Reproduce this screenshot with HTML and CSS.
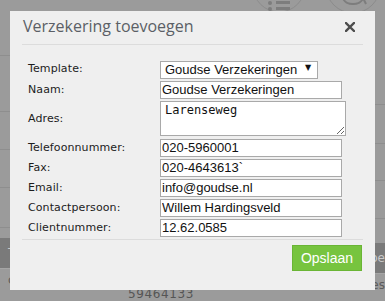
FILE: index.html
```html
<!DOCTYPE html>
<html lang="nl">
<head>
    <meta charset="UTF-8">
    <meta name="viewport" content="width=device-width, initial-scale=1.0">
    <title>Verzekering toevoegen</title>
    <link rel="stylesheet" href="styles.css">
</head>
<body>

    <div class="page">
        <div class="col col-left">
            <div class="row r57"></div>
            <div class="row r57"></div>
            <div class="row r39"></div>
            <div class="row r38"></div>
            <div class="row r41"></div>
            <div class="row r11"></div>
            <div class="band"><span>T</span></div>
            <div class="row-last">
                <span class="frag">c</span>
                <span class="num">59464133</span>
            </div>
        </div>
        <div class="col col-right">
            <div class="icons">
                <svg width="145" height="14" viewBox="0 0 145 14">
                    <circle cx="39" cy="-14" r="26" fill="none" stroke="#8c8c8c" stroke-width="1"/>
                    <circle cx="30" cy="3" r="2" fill="#7d7d7d"/>
                    <rect x="36" y="1" width="14" height="3" fill="#7d7d7d"/>
                    <circle cx="30" cy="9" r="2" fill="#7d7d7d"/>
                    <rect x="36" y="7" width="14" height="3" fill="#7d7d7d"/>
                    <circle cx="113" cy="-14" r="27" fill="none" stroke="#8c8c8c" stroke-width="1"/>
                    <path d="M103 -2 C105 6 121 6 123 -2" fill="none" stroke="#7d7d7d" stroke-width="2"/>
                    <path d="M123 -2 L126 4" fill="none" stroke="#7d7d7d" stroke-width="2"/>
                </svg>
            </div>
            <div class="row r91"></div>
            <div class="row r39"></div>
            <div class="row r37"></div>
            <div class="row r38"></div>
            <div class="row r24"></div>
            <div class="band"><span>pe</span></div>
            <div class="row-last"><span>es</span></div>
        </div>
    </div>

    <div class="modal">
        <div class="modal-header">
            <h3>Verzekering toevoegen</h3>
            <span class="close">
                <svg width="10" height="10" viewBox="0 0 10 10">
                    <path d="M1 1 L9 9 M9 1 L1 9" stroke="#4d4d4d" stroke-width="2.4" stroke-linecap="square"/>
                </svg>
            </span>
        </div>

        <form class="modal-body">
            <label>Template:</label>
            <span class="select-wrap">
                <select>
                    <option>Goudse Verzekeringen</option>
                </select>
            </span>

            <label>Naam:</label>
            <input type="text" value="Goudse Verzekeringen">

            <label>Adres:</label>
            <textarea>Larenseweg</textarea>

            <label>Telefoonnummer:</label>
            <input type="text" value="020-5960001">

            <label>Fax:</label>
            <input type="text" value="020-4643613`">

            <label>Email:</label>
            <input type="text" value="info@goudse.nl">

            <label>Contactpersoon:</label>
            <input type="text" value="Willem Hardingsveld">

            <label>Clientnummer:</label>
            <input type="text" value="12.62.0585">
        </form>

        <div class="modal-footer">
            <button type="button">Opslaan</button>
        </div>
    </div>

</body>
</html>
```

FILE: styles.css
```css
body { margin: 0; width: 385px; height: 301px; overflow: hidden; background: #9b9b9b; font-family: "DejaVu Sans", Verdana, sans-serif; }

/* dimmed page behind the dialog */
.page { display: flex; height: 301px; }
.col { display: flex; flex-direction: column; }
.col-left { width: 200px; }
.col-right { width: 185px; }
.row { border-bottom: 1px solid #8e8e8e; box-sizing: border-box; }
.r57 { height: 57px; }
.r39 { height: 39px; }
.r38 { height: 38px; }
.r41 { height: 41px; }
.r37 { height: 37px; }
.r11 { height: 10px; border-bottom: none; }
.r91 { height: 91px; }
.r24 { height: 24px; border-bottom: none; }
.col-left .r57:first-child { height: 57px; }
.icons { height: 14px; }
.icons svg { display: block; margin-left: 40px; }
.band { height: 30px; background: #7a7a7a; border-bottom: 1px solid #a5a5a5; color: #c8c8c8; font-size: 12px; line-height: 30px; padding: 0 8px; }
.col-right .band, .col-right .row-last { text-align: right; padding-right: 0; }
.row-last { padding: 4px 8px 0; font-size: 12px; color: #5c5c5c; }
.row-last .frag { display: block; }
.row-last .num { display: block; padding: 0 0 0 120px; letter-spacing: 0.6px; color: #555; }

/* dialog */
.modal { position: fixed; left: 10px; top: 11px; width: 365px; height: 279px; background: #efefef; }
.modal-header { display: flex; align-items: center; margin: 0 12px; padding: 4px 0 6px 1px; border-bottom: 1px solid #dcdcdc; }
.modal-header h3 { flex: 1; margin: 0; font-family: "Open Sans", sans-serif; font-weight: normal; font-size: 16px; line-height: 23px; color: #5b5f66; }
.close { display: flex; margin-right: 8px; padding-top: 1px; }

.modal-body { display: grid; grid-template-columns: 132px auto; row-gap: 2px; align-items: center; margin: 0 12px; padding: 14px 0 0 6px; }
.modal-body label { font-size: 11px; color: #1c1c1c; letter-spacing: 0.1px; }
.modal-body input, .modal-body select, .modal-body textarea { box-sizing: border-box; border: 1px solid #a9a9a9; background: #fff; color: #111; font-family: "Liberation Sans", Arial, sans-serif; font-size: 13px; margin: 0; border-radius: 0; outline: none; }
.modal-body input { width: 182px; height: 18px; padding: 0 1px; }
.select-wrap { position: relative; display: block; width: 158px; }
.select-wrap select { -webkit-appearance: none; appearance: none; width: 158px; height: 18px; padding: 0 0 0 4px; }
.select-wrap::after { content: "\25BC"; position: absolute; left: 145px; top: 4px; font-size: 8px; color: #111; }
.modal-body textarea { width: 186px; height: 35px; padding: 1px 4px; margin-bottom: 1px; font-family: "DejaVu Sans Mono", monospace; font-size: 12px; line-height: 14px; }

.modal-footer { display: flex; justify-content: flex-end; margin: 2px 12px 0; padding: 5px 1px 0 0; border-top: 1px solid #dcdcdc; }
.modal-footer button { width: 70px; height: 26px; background: #77c43f; border: 1px solid #6ab535; color: #fff; font-family: "Liberation Sans", Arial, sans-serif; font-size: 14px; cursor: pointer; padding: 0; }
```
